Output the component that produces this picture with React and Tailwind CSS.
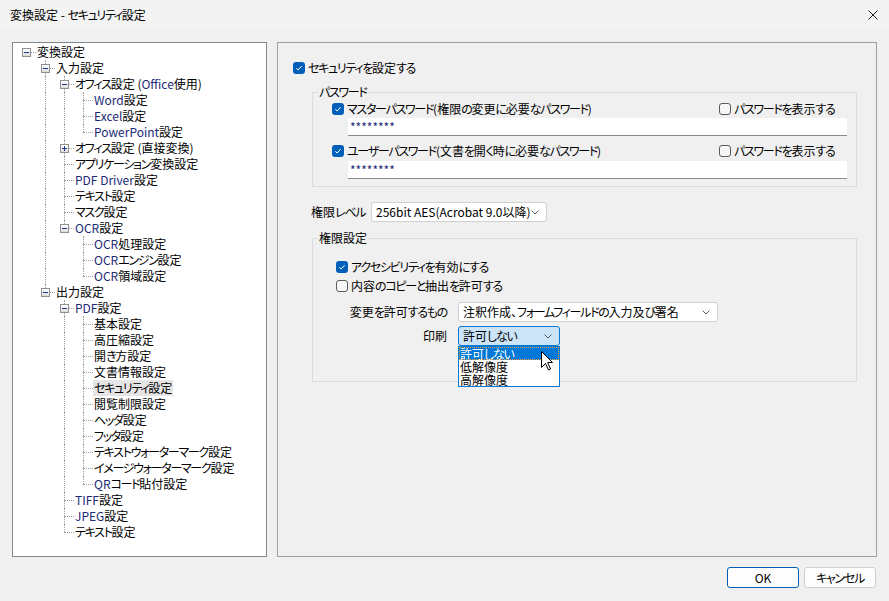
import React from "react";

const font = "font-['Noto_Sans_CJK_JP','Noto_Sans',sans-serif] [font-feature-settings:'palt']";

// 設定ツリー
const tree = [
    {
        label: "変換設定",
        open: true,
        children: [
            {
                label: "入力設定",
                open: true,
                children: [
                    {
                        label: "オフィス設定 (Office使用)",
                        open: true,
                        children: [{ label: "Word設定" }, { label: "Excel設定" }, { label: "PowerPoint設定" }],
                    },
                    { label: "オフィス設定 (直接変換)", open: false, children: [{ label: "-" }] },
                    { label: "アプリケーション変換設定" },
                    { label: "PDF Driver設定" },
                    { label: "テキスト設定" },
                    { label: "マスク設定" },
                    {
                        label: "OCR設定",
                        open: true,
                        children: [{ label: "OCR処理設定" }, { label: "OCRエンジン設定" }, { label: "OCR領域設定" }],
                    },
                ],
            },
            {
                label: "出力設定",
                open: true,
                children: [
                    {
                        label: "PDF設定",
                        open: true,
                        children: [
                            { label: "基本設定" },
                            { label: "高圧縮設定" },
                            { label: "開き方設定" },
                            { label: "文書情報設定" },
                            { label: "セキュリティ設定", selected: true },
                            { label: "閲覧制限設定" },
                            { label: "ヘッダ設定" },
                            { label: "フッタ設定" },
                            { label: "テキストウォーターマーク設定" },
                            { label: "イメージウォーターマーク設定" },
                            { label: "QRコード貼付設定" },
                        ],
                    },
                    { label: "TIFF設定" },
                    { label: "JPEG設定" },
                    { label: "テキスト設定" },
                ],
            },
        ],
    },
];

const flatten = (nodes, level, guides, out) => {
    nodes.forEach((node, i) => {
        const last = i === nodes.length - 1;
        out.push({ node, level, guides, last, top: !(level === 0 && i === 0) });
        if (node.open && node.children) flatten(node.children, level + 1, [...guides, !last], out);
    });
    return out;
};

// kana runs are tightened a little (the UI font has narrow kana), latin runs can be tinted
const jp = (text, latinClass = "") =>
    text.split(/([A-Za-z]+|[\u3041-\u30ff]+)/).map((part, i) => {
        if (/^[A-Za-z]+$/.test(part))
            return latinClass ? (
                <span key={i} className={latinClass}>
                    {part}
                </span>
            ) : (
                part
            );
        if (/^[\u3041-\u30ff]+$/.test(part))
            return (
                <span key={i} className="tracking-[-1.3px]">
                    {part}
                </span>
            );
        return part;
    });

const TreeRow = ({ row }) => {
    const { node, guides, last, top } = row;
    const hasChildren = node.children && node.children.length > 0;
    return (
        <div className="flex h-[16px] pl-[4px]">
            {guides.map((g, k) => (
                <div key={k} className="relative w-[19px] shrink-0">
                    {g && <div className="absolute left-[9px] top-0 bottom-0 border-l border-dotted border-[#a0a0a0]" />}
                </div>
            ))}
            <div className="relative w-[19px] shrink-0">
                {top && <div className="absolute left-[9px] top-0 h-[8px] border-l border-dotted border-[#a0a0a0]" />}
                {!last && <div className="absolute left-[9px] top-[8px] bottom-0 border-l border-dotted border-[#a0a0a0]" />}
                <div className="absolute left-[9px] right-0 top-[8px] border-t border-dotted border-[#a0a0a0]" />
                {hasChildren && (
                    <div className="absolute left-[5px] top-[4px] flex h-[9px] w-[9px] items-center justify-center border border-[#919191] bg-gradient-to-b from-white to-[#dcdcdc]">
                        <div className="relative h-[1px] w-[5px] bg-[#1d3a8a]">
                            {!node.open && <div className="absolute left-[2px] top-[-2px] h-[5px] w-[1px] bg-[#1d3a8a]" />}
                        </div>
                    </div>
                )}
            </div>
            <span
                className={
                    "h-[16px] whitespace-nowrap px-[1px] text-[12px] leading-[16px] text-black " +
                    (node.selected ? "bg-[#e5e5e5]" : "")
                }
            >
                {jp(node.label, "text-[#1c2a78]")}
            </span>
        </div>
    );
};

const Check = ({ checked, children }) => (
    <div className="flex h-[16px] items-center">
        {checked ? (
            <span className="flex h-[12px] w-[12px] shrink-0 items-center justify-center rounded-[3px] bg-[#005fb8]">
                <svg width="8" height="8" viewBox="0 0 8 8">
                    <path d="M1.3 4.3 L3.1 6 L6.7 2.1" stroke="white" strokeWidth="1" fill="none" />
                </svg>
            </span>
        ) : (
            <span className="h-[12px] w-[12px] shrink-0 rounded-[3px] border border-[#5c5c5c] bg-[#f7f7f7]" />
        )}
        <span className="ml-[3px] whitespace-nowrap">{jp(children)}</span>
    </div>
);

const Chevron = () => (
    <svg width="8" height="5" viewBox="0 0 8 5" className="shrink-0">
        <polyline points="0.5,0.5 4,4 7.5,0.5" stroke="#606060" strokeWidth="1" fill="none" />
    </svg>
);

const Select = ({ value, className = "", focused }) => (
    <div
        className={
            "flex h-[20px] items-center rounded-[3px] border pl-[4px] pr-[7px] " +
            (focused ? "border-[#0078d7] bg-[#cce4f7] " : "border-[#d0d0d0] bg-white ") +
            className
        }
    >
        <span className="flex-1 whitespace-nowrap">{jp(value)}</span>
        <Chevron />
    </div>
);

const Group = ({ title, className = "", children }) => (
    <div className={"relative ml-[19px] w-[545px] border border-[#dcdcdc] " + className}>
        <span className="absolute left-[5px] top-[-9px] bg-[#f0f0f0] px-[1px] leading-[16px]">{jp(title)}</span>
        {children}
    </div>
);

const App = () => {
    const rows = flatten(tree, 0, [], []);
    return (
        <div className={"h-[601px] w-[889px] overflow-hidden bg-[#f0f0f0] text-[12px] text-black " + font}>
            {/* Title bar */}
            <div className="flex h-[30px] items-center justify-between bg-[#f3f3f3] pl-[10px] pr-[11px]">
                <span>{jp("変換設定 - セキュリティ設定")}</span>
                <svg width="10" height="10" viewBox="0 0 10 10">
                    <path d="M0.5 0.5 L9.5 9.5 M9.5 0.5 L0.5 9.5" stroke="#1a1a1a" strokeWidth="1" />
                </svg>
            </div>

            <div className="flex gap-[10px] pl-[12px] pt-[12px]">
                {/* Tree */}
                <div className="h-[515px] w-[255px] overflow-hidden border border-[#828790] bg-white pt-[1px]">
                    {rows.map((row, i) => (
                        <TreeRow key={i} row={row} />
                    ))}
                </div>

                {/* Security page */}
                <div className="h-[515px] w-[600px] border border-[#a0a0a0] bg-[#f0f0f0] pl-[15px] pt-[17px]">
                    <Check checked>セキュリティを設定する</Check>

                    <Group title="パスワード" className="mt-[16px] pb-[7px] pl-[19px] pt-[8px]">
                        <div className="flex">
                            <div className="w-[387px]">
                                <Check checked>マスターパスワード(権限の変更に必要なパスワード)</Check>
                            </div>
                            <Check>パスワードを表示する</Check>
                        </div>
                        <div className="ml-[16px] mt-[1px] flex h-[18px] w-[499px] items-center border-b border-[#8a8a8a] bg-white pl-[2px] text-[#1c2a78]">
                            ********
                        </div>
                        <div className="mt-[7px] flex">
                            <div className="w-[387px]">
                                <Check checked>ユーザーパスワード(文書を開く時に必要なパスワード)</Check>
                            </div>
                            <Check>パスワードを表示する</Check>
                        </div>
                        <div className="ml-[16px] mt-[2px] flex h-[18px] w-[499px] items-center border-b border-[#8a8a8a] bg-white pl-[2px] text-[#1c2a78]">
                            ********
                        </div>
                    </Group>

                    <div className="ml-[18px] mt-[15px] flex items-center">
                        <span className="w-[60px] whitespace-nowrap">{jp("権限レベル")}</span>
                        <Select value="256bit AES(Acrobat 9.0以降)" className="w-[176px]" />
                    </div>

                    <Group title="権限設定" className="mt-[16px] pb-[35px] pl-[23px] pt-[20px]">
                        <Check checked>アクセシビリティを有効にする</Check>
                        <div className="mt-[3px]">
                            <Check>内容のコピーと抽出を許可する</Check>
                        </div>
                        <div className="mt-[8px] flex items-center">
                            <span className="w-[111px] whitespace-nowrap text-right">{jp("変更を許可するもの")}</span>
                            <Select value="注釈作成、フォームフィールドの入力及び署名" className="ml-[11px] w-[260px]" />
                        </div>
                        <div className="mt-[4px] flex items-center">
                            <span className="w-[111px] whitespace-nowrap text-right">印刷</span>
                            <div className="relative ml-[11px]">
                                <Select value="許可しない" className="w-[102px]" focused />
                                {/* open dropdown */}
                                <div className="absolute left-0 top-full z-10 w-[102px] border border-[#0078d7] bg-white">
                                    <div className="h-[13px] bg-[#0078d7] pl-[1px] leading-[13px] text-white outline outline-1 -outline-offset-1 outline-dotted outline-[#f0a040]">
                                        {jp("許可しない")}
                                    </div>
                                    <div className="h-[13px] pl-[1px] leading-[13px]">低解像度</div>
                                    <div className="h-[13px] pl-[1px] leading-[13px]">高解像度</div>
                                    <svg
                                        width="13"
                                        height="20"
                                        viewBox="0 0 13 20"
                                        className="absolute left-[82px] top-[4px]"
                                    >
                                        <path
                                            d="M0.5 0.5 L0.5 16.5 L4.5 12.5 L7.5 19 L9.5 18 L6.7 11.5 L11.5 11.5 Z"
                                            fill="white"
                                            stroke="black"
                                            strokeWidth="1"
                                            strokeLinejoin="miter"
                                        />
                                    </svg>
                                </div>
                            </div>
                        </div>
                    </Group>
                </div>
            </div>

            {/* Buttons */}
            <div className="mt-[10px] flex justify-end gap-[5px] pr-[13px]">
                <button className="h-[21px] w-[72px] rounded-[3px] border border-[#005fb8] bg-[#fdfdfd] text-[12px]">
                    OK
                </button>
                <button className="h-[21px] w-[72px] rounded-[3px] border border-[#d0d0d0] bg-[#fdfdfd] text-[12px]">
                    {jp("キャンセル")}
                </button>
            </div>
        </div>
    );
};

export default App;
